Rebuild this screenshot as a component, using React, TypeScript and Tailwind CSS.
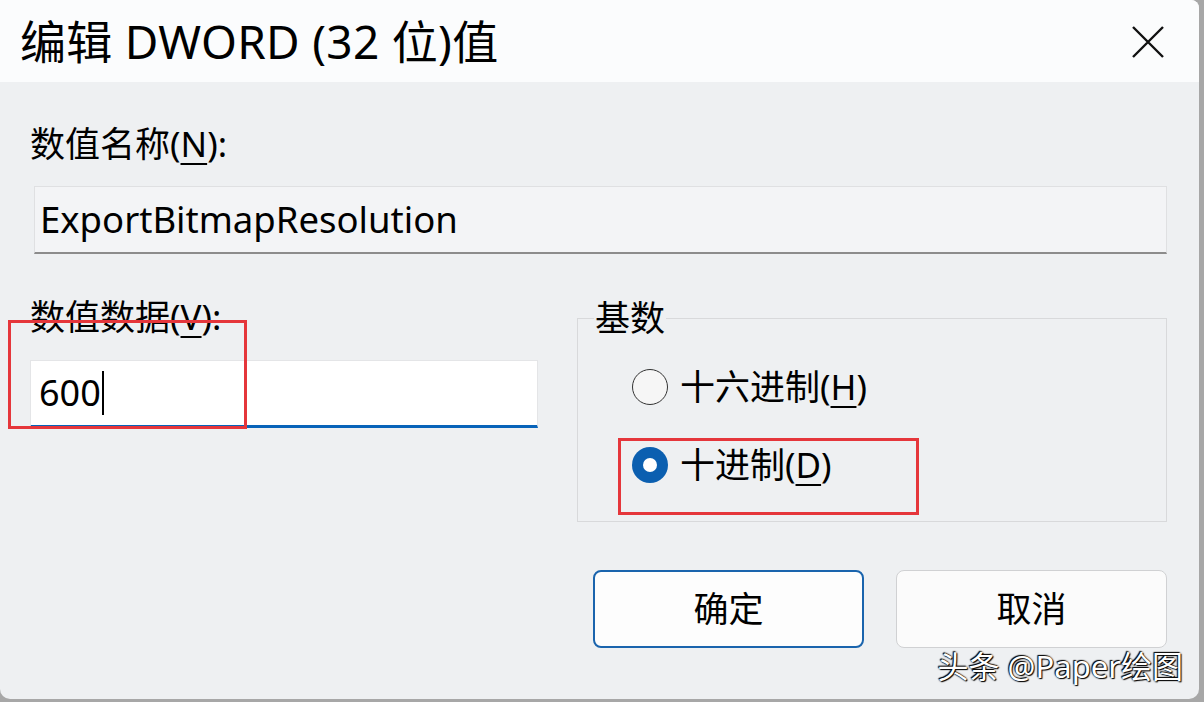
import React from 'react';

const font = { fontFamily: '"Noto Sans", "Noto Sans CJK SC", sans-serif' };

function Radio({ checked }: { checked?: boolean }) {
  if (checked) {
    return (
      <span className="flex size-[36px] items-center justify-center rounded-full bg-[#0b5fb0]">
        <span className="size-[14px] rounded-full bg-white" />
      </span>
    );
  }
  return <span className="size-[36px] rounded-full border-[1.5px] border-[#333] bg-[#f6f6f6]" />;
}

export default function App() {
  return (
    <div className="h-[702px] w-[1204px] overflow-hidden bg-[#a7a7a7]" style={font}>
      <div className="relative flex h-[699px] w-[1199px] flex-col overflow-hidden rounded-tr-[8px] rounded-b-[10px] bg-[#eef0f2] text-black">
        {/* Title bar */}
        <div className="flex h-[82px] shrink-0 items-center justify-between bg-[#fbfcfd] pl-[20px] pr-[34px]">
          <h1 className="text-[46px] leading-none tracking-[0.3px]">编辑 DWORD (32 位)值</h1>
          <svg width="34" height="34" viewBox="0 0 34 34" className="mt-[2px]">
            <path d="M2 2 L32 32 M32 2 L2 32" stroke="#111" strokeWidth="2.4" />
          </svg>
        </div>

        {/* Body */}
        <div className="flex flex-1 flex-col pl-[30px] pr-[32px]">
          <label className="mt-[41px] text-[35px] leading-[42px]">
            数值名称(<span className="underline underline-offset-[6px] decoration-[2px]">N</span>):
          </label>
          <div className="ml-[4px] mt-[21px] flex h-[68px] items-center border border-b-2 border-[#dfe0e2] border-b-[#8c8c8c] bg-[#f3f4f6] pl-[5px] text-[36.5px]">
            ExportBitmapResolution
          </div>

          <div className="mt-[42px] flex">
            {/* Value data */}
            <div className="flex w-[508px] flex-col">
              <label className="text-[35px] leading-[42px]">
                数值数据(<span className="underline underline-offset-[6px] decoration-[2px]">V</span>):
              </label>
              <div className="mt-[22px] flex h-[68px] items-center border border-b-[3px] border-[#e4e5e7] border-b-[#0763b9] bg-white pl-[8px] text-[36px]">
                600<span className="ml-[1px] h-[44px] w-[2px] bg-black" />
              </div>
            </div>

            {/* Radix group */}
            <fieldset className="ml-[39px] mt-[4px] h-[222px] flex-1 border border-[#d8d9db]">
              <legend className="ml-[16px] px-[1px] text-[35px] leading-[36px]">基数</legend>
              <div className="pl-[54px]">
                <div className="mt-[25px] flex items-center gap-[12px] text-[35px]">
                  <Radio />
                  <span>
                    十六进制(<span className="underline underline-offset-[6px] decoration-[2px]">H</span>)
                  </span>
                </div>
                <div className="mt-[25px] flex items-center gap-[12px] text-[35px]">
                  <Radio checked />
                  <span>
                    十进制(<span className="underline underline-offset-[6px] decoration-[2px]">D</span>)
                  </span>
                </div>
              </div>
            </fieldset>
          </div>

          {/* Buttons */}
          <div className="mt-[48px] flex justify-end gap-[32px]">
            <button className="h-[78px] w-[271px] rounded-[8px] border-2 border-[#1a64ad] bg-[#fdfdfd] text-[35px]">
              确定
            </button>
            <button className="h-[78px] w-[271px] rounded-[8px] border border-[#d0d1d3] bg-[#fbfbfb] text-[35px]">
              取消
            </button>
          </div>
        </div>

        {/* Annotation boxes */}
        <div className="absolute left-[8px] top-[320px] h-[109px] w-[239px] border-[3px] border-[#e5363b]" />
        <div className="absolute left-[618px] top-[438px] h-[77px] w-[301px] border-[3px] border-[#e5363b]" />

        {/* Watermark */}
        <div className="absolute right-[16px] top-[648px] text-[31px] leading-[36px] text-white [text-shadow:0_0_2px_#000,1px_1px_1px_#000,-1px_-1px_1px_#000]">
          头条 @Paper绘图
        </div>
      </div>
    </div>
  );
}
